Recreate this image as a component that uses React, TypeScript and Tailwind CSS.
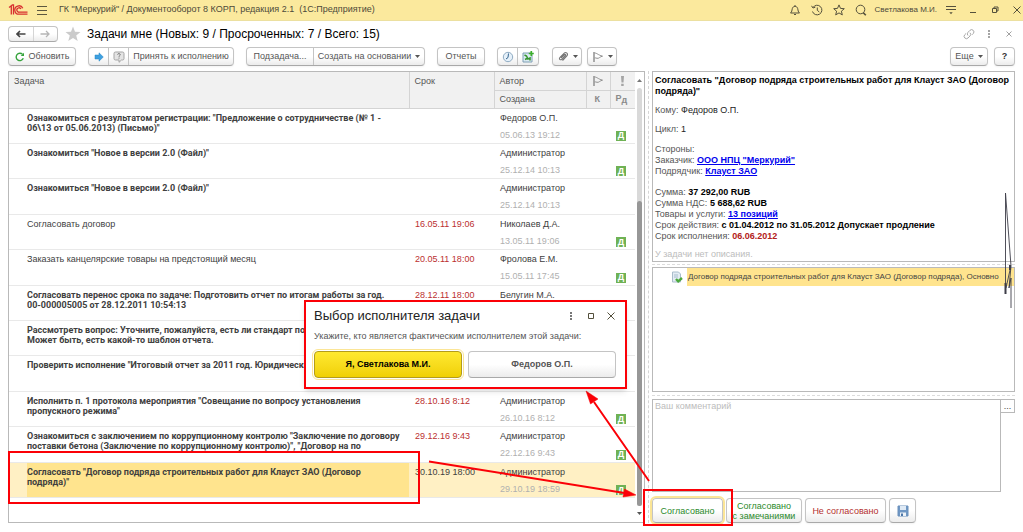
import type { ReactNode } from "react";

type Task = {
  text: string;
  due?: string;
  author: string;
  created: string;
  bold?: boolean;
  doc?: boolean;
  selected?: boolean;
};

const tasks: Task[] = [
  { text: 'Ознакомиться с результатом регистрации: "Предложение о сотрудничестве (№ 1 -\n06\\13 от 05.06.2013) (Письмо)"', author: "Федоров О.П.", created: "05.06.13 19:12", bold: true, doc: true },
  { text: 'Ознакомиться "Новое в версии 2.0 (Файл)"', author: "Администратор", created: "25.12.14 10:13", bold: true, doc: true },
  { text: 'Ознакомиться "Новое в версии 2.0 (Файл)"', author: "Администратор", created: "25.12.14 10:13", bold: true },
  { text: "Согласовать договор", due: "16.05.11 19:06", author: "Николаев Д.А.", created: "13.05.11 19:06", doc: true },
  { text: "Заказать канцелярские товары на предстоящий месяц", due: "20.05.11 18:00", author: "Фролова Е.М.", created: "15.05.11 17:45", doc: true },
  { text: "Согласовать перенос срока по задаче: Подготовить отчет по итогам работы за год.\n00-000005005 от 28.12.2011 10:54:13", due: "28.12.11 18:00", author: "Белугин М.А.", created: "", bold: true },
  { text: "Рассмотреть вопрос: Уточните, пожалуйста, есть ли стандарт по\nМожет быть, есть какой-то шаблон отчета.", author: "", created: "", bold: true },
  { text: 'Проверить исполнение "Итоговый отчет за 2011 год. Юридический', author: "", created: "", bold: true },
  { text: 'Исполнить п. 1 протокола мероприятия "Совещание по вопросу установления\nпропускного режима"', due: "28.10.16 8:12", author: "Администратор", created: "26.10.16 8:12", bold: true, doc: true },
  { text: 'Ознакомиться с заключением по коррупционному контролю "Заключение по договору\nпоставки бетона (Заключение по коррупционному контролю)", "Договор на по', due: "29.12.16 9:43", author: "Администратор", created: "22.12.16 9:43", bold: true, doc: true },
  { text: 'Согласовать "Договор подряда строительных работ для Клауст ЗАО (Договор\nподряда)"', due: "30.10.19 18:00", author: "Администратор", created: "29.10.19 18:59", bold: true, doc: true, selected: true },
];

const face = "bg-linear-to-b from-white from-50% to-[#ececec] border border-[#c4c4c4] border-b-[#a9a9a9]";

function Group({ children }: { children: ReactNode }) {
  return <div className={`flex h-[19px] shrink-0 divide-x divide-[#c4c4c4] rounded-sm shadow-xs ${face}`}>{children}</div>;
}

function Tool({ children, className = "", label }: { children: ReactNode; className?: string; label?: string }) {
  return (
    <button type="button" aria-label={label} className={`flex items-center justify-center gap-1 whitespace-nowrap ${className}`}>
      {children}
    </button>
  );
}

function Caret() {
  return (
    <svg viewBox="0 0 5 3" className="h-[3px] w-[5px] shrink-0" fill="#555">
      <path d="M0 0h5L2.5 3z" />
    </svg>
  );
}

function Flag() {
  return (
    <svg viewBox="0 0 12 12" className="size-3" fill="none" stroke="#909090" strokeWidth="1">
      <path d="M2 1v10" strokeWidth="1.5" />
      <path d="M2.500 2c2.500 0 3 1.700 8 3.200C8 5.500 7 7.800 5 7.300 4 7 3.500 6.700 2.500 7" />
    </svg>
  );
}

function DocBadge() {
  return <span className="flex size-[10px] items-center justify-center bg-[#6fb255] text-[9px] leading-none font-bold text-white">Д</span>;
}

function BarIcon({ label, children }: { label: string; children: ReactNode }) {
  return (
    <button type="button" aria-label={label} className="flex w-[12px] items-center justify-center">
      <svg viewBox="0 0 12 12" className="size-3 shrink-0" fill="none" stroke="#54503c" strokeWidth="1">
        {children}
      </svg>
    </button>
  );
}

function TitleBar() {
  return (
    <header className="flex h-[21px] shrink-0 items-center border-b border-[#ece0a0] bg-[#fbe99d] pl-2 text-[#4d4a3a]">
      <svg viewBox="0 0 20 12" className="h-3 w-5" fill="none" stroke="#d8302f" strokeWidth="1.3">
        <path d="M1 3.500L3.300 1.800V10.500M5.500 10.500V1H3.800" />
        <path d="M14.800 4.200A4.200 4.200 0 1 0 11.300 10.200H19.500" />
        <path d="M13 5A2.200 2.200 0 1 0 11.400 8.200H19.500" />
      </svg>
      <button type="button" aria-label="Меню" className="ml-[9px] flex w-3 flex-col gap-[3px]">
        <span className="h-px w-[10px] bg-[#5c573f]" />
        <span className="h-px w-[10px] bg-[#5c573f]" />
        <span className="h-px w-[10px] bg-[#5c573f]" />
      </button>
      <div className="ml-[10px] flex-1 text-[9px] whitespace-pre">ГК "Меркурий" / Документооборот 8 КОРП, редакция 2.1  (1С:Предприятие)</div>
      <div className="flex items-center gap-[10px]">
        <BarIcon label="Оповещения">
          <path d="M1.500 9h9C9 7.800 9.200 6.500 8.700 4.600 8.300 3 7.200 2.400 6 2.400S3.700 3 3.300 4.600C2.800 6.500 3 7.800 1.500 9zM6 1v1.400M5 10.500h2" />
        </BarIcon>
        <BarIcon label="История">
          <path d="M2 3.500A4.800 4.800 0 1 1 1.500 7.500M.5 1.800L2 4l2.300-.8M6.300 3.500V6.300L8.300 8" />
        </BarIcon>
        <BarIcon label="Избранное">
          <path d="M6 .9l1.500 3.500 3.800.3-2.900 2.500.9 3.700L6 8.900l-3.300 2 .9-3.700L.7 4.700l3.800-.3z" />
        </BarIcon>
        <BarIcon label="Поиск">
          <circle cx="5.500" cy="5.500" r="4.300" />
          <path d="M8.200 8.600l2.600 2.600" strokeWidth="1.600" />
        </BarIcon>
      </div>
      <span className="mx-2 text-[8px]">Светлакова М.И.</span>
      <div className="flex items-center gap-[10px]">
        <BarIcon label="Сервис">
          <path d="M1 2.500h10M1 5.500h10" />
          <path d="M4.300 8.300h3.400L6 10.300z" fill="#54503c" stroke="none" />
        </BarIcon>
        <BarIcon label="Свернуть">
          <path d="M3 8.500h6" />
        </BarIcon>
        <BarIcon label="Развернуть">
          <path d="M3.500 4.500h4v4h-4zM5 4.500V3h4v4H7.500" />
        </BarIcon>
        <BarIcon label="Закрыть">
          <path d="M2.500 2.500l7 7M9.500 2.500l-7 7" />
        </BarIcon>
      </div>
    </header>
  );
}

function PageHeading() {
  return (
    <div className="flex h-[26px] shrink-0 items-center px-2">
      <div className={`flex h-4 w-[50px] shrink-0 divide-x divide-[#d5d5d5] rounded-sm ${face}`}>
        <Tool label="Назад" className="flex-1">
          <svg viewBox="0 0 10 8" className="h-2 w-[10px]" fill="none" stroke="#444" strokeWidth="1.600">
            <path d="M1 4h8.500M4 1L1 4l3 3" />
          </svg>
        </Tool>
        <Tool label="Вперед" className="flex-1">
          <svg viewBox="0 0 10 8" className="h-2 w-[10px]" fill="none" stroke="#b5b5b5" strokeWidth="1.300">
            <path d="M.5 4H9M6 1l3 3-3 3" />
          </svg>
        </Tool>
      </div>
      <svg viewBox="0 0 16 16" className="ml-[7px] size-4 shrink-0" fill="#cbcbcb">
        <path d="M8 .5l2 5.200 5.500.3-4.300 3.500 1.500 5.500L8 12l-4.700 3 1.500-5.500L.5 6 6 5.700z" />
      </svg>
      <h1 className="ml-[6px] flex-1 text-[12px] text-black">Задачи мне (Новых: 9 / Просроченных: 7 / Всего: 15)</h1>
      <div className="flex items-center gap-[10px]">
        <svg viewBox="0 0 12 12" className="size-3" fill="none" stroke="#a8a8a8">
          <path d="M5 7.500a2.300 2.300 0 0 1 0-3.200l2-2a2.300 2.300 0 0 1 3.300 3.200L9 6.800M7 4.800a2.300 2.300 0 0 1 0 3.200l-2 2a2.300 2.300 0 0 1-3.300-3.200L3 5.500" />
        </svg>
        <svg viewBox="0 0 8 12" className="h-3 w-2" fill="#a5a5a5">
          <path d="M3 2h2v2H3zM3 5h2v2H3zM3 8h2v2H3z" />
        </svg>
        <svg viewBox="0 0 12 12" className="size-3" fill="none" stroke="#a0a0a0">
          <path d="M3.500 3.500l5 5M8.500 3.500l-5 5" />
        </svg>
      </div>
    </div>
  );
}

function Toolbar() {
  return (
    <div className="flex h-6 shrink-0 items-start gap-3 px-2 text-[9px] text-[#555]">
      <Group>
        <Tool className="w-[66px]">
          <svg viewBox="0 0 10 10" className="size-[10px]" fill="none" stroke="#36a33c" strokeWidth="1.400">
            <path d="M8.300 6.300A3.700 3.700 0 1 1 7.600 2.400" />
            <path d="M9 .8v3.300H5.700z" fill="#36a33c" stroke="none" />
          </svg>
          Обновить
        </Tool>
      </Group>
      <Group>
        <Tool label="Перейти" className="w-5">
          <svg viewBox="0 0 10 10" className="size-[10px]" fill="#3ea0e0" stroke="#2585c4" strokeWidth=".5">
            <path d="M1 3h4V.8L9.300 5 5 9.200V7H1z" />
          </svg>
        </Tool>
        <Tool label="Вопрос" className="w-5">
          <svg viewBox="0 0 12 12" className="size-3" fill="#e4e4e4" stroke="#a5a5a5">
            <path d="M2.500 1h7a1.500 1.500 0 0 1 1.500 1.500v5A1.500 1.500 0 0 1 9.500 9H8.500L6 11.300V9H2.500A1.500 1.500 0 0 1 1 7.500v-5A1.500 1.500 0 0 1 2.500 1z" />
            <path d="M4.500 3.600c.2-1.400 2.900-1.300 2.800.2C7.200 4.700 6 4.600 6 5.800M6 6.600v1" fill="none" stroke="#777" />
          </svg>
        </Tool>
        <Tool className="w-[104px]">Принять к исполнению</Tool>
      </Group>
      <Group>
        <Tool className="w-[67px]">Подзадача...</Tool>
        <Tool className="w-[110px]">Создать на основании <Caret /></Tool>
      </Group>
      <Group>
        <Tool className="w-[46px]">Отчеты</Tool>
      </Group>
      <Group>
        <Tool label="Срок" className="w-5">
          <svg viewBox="0 0 12 12" className="size-3" fill="#e6f1fa" stroke="#8fabc2">
            <circle cx="6" cy="6" r="4.700" />
            <path d="M6.500 2.500L6 6.500 4 8" fill="none" stroke="#35658e" />
          </svg>
        </Tool>
        <Tool label="Добавить" className="w-5">
          <svg viewBox="0 0 12 12" className="size-3">
            <path d="M1 2h9v9H1z" fill="#dcebf4" stroke="#7f9fb4" />
            <path d="M2.500 4l2 1 1.500 3 2-1v2.500M3 8.500l2-1" fill="none" stroke="#37962f" strokeWidth="1.600" />
            <path d="M9.300 0v5M6.800 2.500h5" stroke="#3cae2c" strokeWidth="1.700" />
          </svg>
        </Tool>
      </Group>
      <div className="flex flex-1 gap-[5px] pl-px">
        <Group>
          <Tool label="Файлы" className="w-7">
            <svg viewBox="0 0 12 12" className="size-3" fill="none" stroke="#777" strokeWidth="1.100">
              <path d="M4 7l3.500-3.500c.8-.8 1.800.2 1 1L4.800 8.300C3.400 9.700 1.500 7.800 3 6.400L7 2.300c2-1.900 4.800.6 2.900 2.600L5.500 9.500" />
            </svg>
            <Caret />
          </Tool>
        </Group>
        <Group>
          <Tool label="Флаг" className="w-7"><Flag /><Caret /></Tool>
        </Group>
      </div>
      <div className="flex gap-[6px]">
        <Group>
          <Tool className="w-9">Еще <Caret /></Tool>
        </Group>
        <Group>
          <Tool className="w-[19px] font-bold text-[#333]">?</Tool>
        </Group>
      </div>
    </div>
  );
}

function TaskTable() {
  const th = "border-[#d4d4d4] bg-[#f1f1f1] px-[5px] py-0 text-left font-normal";
  return (
    <section className="flex min-w-0 flex-1 border border-[#b9b9b9]">
      <div className="min-w-0 flex-1">
        <table className="h-[426px] w-full table-fixed border-collapse text-[9px] leading-[10px] text-[#404040]">
          <colgroup>
            <col />
            <col className="w-[85px]" />
            <col className="w-[92px]" />
            <col className="w-6" />
            <col className="w-[25px]" />
          </colgroup>
          <thead className="text-[#555]">
            <tr className="h-[18px]">
              <th rowSpan={2} className={`${th} border-r border-b pt-1 align-top`}>Задача</th>
              <th rowSpan={2} className={`${th} border-r border-b pt-1 align-top`}>Срок</th>
              <th className={`${th} border-r border-b`}>Автор</th>
              <th className={`${th} border-r border-b`} aria-label="Флаг"><Flag /></th>
              <th className={`${th} border-b`} aria-label="Важность">
                <svg viewBox="0 0 12 12" className="size-3" fill="#a5a5a5"><path d="M5 1h3L7.500 7.500h-2zM5.200 8.700h2.500V11H5.200z" /></svg>
              </th>
            </tr>
            <tr className="h-[18px]">
              <th className={`${th} border-r border-b`}>Создана</th>
              <th className={`${th} border-r border-b`}><span className="pl-[3px] font-bold text-[#8a8a8a]">К</span></th>
              <th className={`${th} border-b text-[#8a8a8a]`}>
                <span className="flex leading-[9px] font-bold"><span>Р</span><span className="pt-[2px]">д</span></span>
              </th>
            </tr>
          </thead>
          <tbody>
            {tasks.map((task, i) => (
              <tr key={i} className={`h-[35px] border-b border-[#e9e9e9] ${task.selected ? "bg-[#fff0c4]" : ""}`}>
                <td className="p-0 pl-[18px] align-top">
                  <div className={`h-[34px] pt-[4px] whitespace-pre ${task.bold ? "font-[Roboto,sans-serif] font-bold" : ""} ${task.selected ? "bg-[#ffe48e]" : ""}`}>{task.text}</div>
                </td>
                <td className={`px-[6px] pt-[4px] pb-0 align-top ${task.selected ? "" : "text-[#bb2f2f]"}`}>{task.due}</td>
                <td className="px-[6px] pt-[4px] pb-0 align-top">
                  {task.author}
                  <div className="pt-[7px] text-[#b0b0b0]">{task.created}</div>
                </td>
                <td className="p-0" />
                <td className="px-[6px] pt-0 pb-[2px] align-bottom">{task.doc && <DocBadge />}</td>
              </tr>
            ))}
          </tbody>
        </table>
      </div>
      <div className="flex w-[9px] shrink-0 flex-col items-center py-[7px]">
        <svg viewBox="0 0 5 3" className="h-[3px] w-[5px] shrink-0" fill="#777"><path d="M0 3h5L2.500 0z" /></svg>
        <div className="mt-[6px] flex w-[5px] flex-1 flex-col justify-end rounded-sm bg-[#d9d9d9]">
          <div className="h-[73%] rounded-sm bg-[#979797]" />
        </div>
        <div className="mt-[6px]"><Caret /></div>
      </div>
    </section>
  );
}

const link = "font-bold text-[#0000ee] underline";

function Details() {
  const answer = `flex items-center justify-center rounded-sm text-center leading-[10px] shadow-xs ${face}`;
  return (
    <aside className="flex w-[363px] shrink-0 flex-col text-[9px]">
      <div className="flex h-[191px] shrink-0 flex-col border border-[#b9b9b9] px-[2px] pt-[3px] leading-[11px] text-[#555]">
        <h2 className="font-bold text-black">Согласовать "Договор подряда строительных работ для Клауст ЗАО (Договор<br />подряда)"</h2>
        <p className="mt-2">Кому: <span className="text-[#222]">Федоров О.П.</span></p>
        <p className="mt-2">Цикл: <span className="text-[#222]">1</span></p>
        <div className="mt-[9px]">
          <p>Стороны:</p>
          <p>Заказчик: <a href="#customer" className={link}>ООО НПЦ "Меркурий"</a></p>
          <p>Подрядчик: <a href="#contractor" className={link}>Клауст ЗАО</a></p>
        </div>
        <div className="mt-[10px]">
          <p>Сумма: <b className="text-black">37 292,00 RUB</b></p>
          <p>Сумма НДС: <b className="text-black">5 688,62 RUB</b></p>
          <p>Товары и услуги: <a href="#items" className={link}>13 позиций</a></p>
          <p>Срок действия: <b className="text-black">с 01.04.2012 по 31.05.2012 Допускает продление</b></p>
          <p>Срок исполнения: <b className="text-[#b32020]">06.06.2012</b></p>
        </div>
        <p className="mt-[7px] text-[#bcbcbc]">У задачи нет описания.</p>
      </div>
      <div className="my-[2px] shrink-0 border-b border-dashed border-[#dcdcdc]" />
      <div className="h-[125px] shrink-0 border border-[#b9b9b9]">
        <div className="flex items-center pl-[18px]">
          <svg viewBox="0 0 12 12" className="mr-[4px] size-3 shrink-0">
            <path d="M1.500 1h6l2 2v8h-8z" fill="#e3ecf3" stroke="#a9bccb" />
            <path d="M3 4h4M3 6h4" stroke="#a7bccd" />
            <path d="M5 8l2.200 2.300L11 7" fill="none" stroke="#4ca83d" strokeWidth="2.400" />
          </svg>
          <div className="h-[18px] min-w-0 flex-1 bg-[#ffe48e] pl-px text-[8px] leading-[18px] whitespace-nowrap text-[#444]">
            Договор подряда строительных работ для Клауст ЗАО (Договор подряда), Основно
          </div>
        </div>
      </div>
      <div className="my-[3px] shrink-0 border-b border-dashed border-[#dcdcdc]" />
      <div className="flex min-h-[93px] flex-1 items-start">
        <textarea aria-label="Ваш комментарий" placeholder="Ваш комментарий" className="h-full min-w-0 flex-1 resize-none border border-[#b9b9b9] px-[2px] py-px leading-[11px] placeholder:text-[#bcbcbc]" />
        <button type="button" aria-label="Выбрать" className="h-[14px] w-[14px] border border-l-0 border-[#b9b9b9] leading-[8px] text-[#444]">...</button>
      </div>
      <div className="mt-[6px] flex h-[25px] shrink-0 gap-[3px]">
        <button type="button" className={`${answer} w-[71px] text-[#2b8a2b] outline-2 outline-[#fbe596]`}>Согласовано</button>
        <button type="button" className={`${answer} w-[76px] text-[#2b8a2b]`}>Согласовано<br />с замечаниями</button>
        <button type="button" className={`${answer} w-[81px] text-[#b32f2f]`}>Не согласовано</button>
        <button type="button" aria-label="Сохранить" className={`${answer} w-[27px]`}>
          <svg viewBox="0 0 12 12" className="size-3">
            <path d="M1 1h10v10H1z" fill="#6f97c4" stroke="#6b90bb" />
            <path d="M3 1h6v4H3z" fill="#dfeaf5" />
            <path d="M3 7.500h6V11H3z" fill="#eef3f8" />
            <path d="M4 8.500h2V11H4z" fill="#4c77a8" />
          </svg>
        </button>
      </div>
    </aside>
  );
}

function PerformerDialog() {
  return (
    <div role="dialog" aria-labelledby="dialog-title" className="absolute top-[300px] left-[304px] w-[323px] border-2 border-[#fb0007] bg-white px-2 pt-[6px] pb-[9px] text-[9px] text-[#555] shadow-md">
      <div className="flex items-center">
        <h2 id="dialog-title" className="flex-1 text-[13px] leading-4 text-[#222]">Выбор исполнителя задачи</h2>
        <div className="flex gap-2">
          <BarIcon label="Еще"><path d="M5 2h2v2H5zM5 5h2v2H5zM5 8h2v2H5z" fill="#777" stroke="none" /></BarIcon>
          <BarIcon label="Развернуть"><path d="M3.500 3.500h5v5h-5z" /></BarIcon>
          <BarIcon label="Закрыть"><path d="M2.500 2.500l7 7M9.500 2.500l-7 7" /></BarIcon>
        </div>
      </div>
      <p className="mt-[5px] leading-[14px]">Укажите, кто является фактическим исполнителем этой задачи:</p>
      <div className="mt-2 flex gap-[6px] pr-px font-bold">
        <button type="button" className="h-[27px] flex-1 rounded-sm border border-[#b39c1c] bg-linear-to-b from-[#ffe92e] to-[#f0d000] text-black outline-1 outline-offset-1 outline-[#fbe596]">Я, Светлакова М.И.</button>
        <button type="button" className={`h-[27px] flex-1 rounded-sm ${face}`}>Федоров О.П.</button>
      </div>
    </div>
  );
}

function Callouts() {
  return (
    <>
      <div className="pointer-events-none absolute top-[451px] left-[8px] h-[53px] w-[412px] border-2 border-[#fb0007]" />
      <div className="pointer-events-none absolute top-[489px] left-[643px] h-[37px] w-[90px] border-2 border-[#fb0007]" />
      <svg viewBox="0 0 1023 532" className="pointer-events-none absolute top-0 left-0 h-[532px] w-[1023px]">
        <g stroke="#fb0007" strokeWidth="2" fill="#fb0007">
          <path d="M429 461.500L626 493.300M649 481L594 402" />
          <path d="M636 495L623 497 624.500 489zM586 391L598 399 590.500 404z" strokeWidth=".5" />
        </g>
        <g stroke="#3d3d48" fill="none">
          <path d="M1005.500 193v101M1005.500 193l5.500 73-2 22 2-10v30M1006 288l4-18" strokeWidth=".9" />
          <path d="M1010 265v5M1005.500 283v11" strokeWidth="2" />
        </g>
      </svg>
    </>
  );
}

export default function App() {
  return (
    <div className="relative flex min-h-screen flex-col border-b border-[#c0c0c0] bg-white font-['Liberation_Sans',Arial,sans-serif] leading-normal">
      <TitleBar />
      <PageHeading />
      <Toolbar />
      <main className="flex flex-1 px-2 pb-[9px]">
        <TaskTable />
        <div className="mx-[3px] w-px border-r border-dashed border-[#d6d6d6]" />
        <Details />
      </main>
      <Callouts />
      <PerformerDialog />
    </div>
  );
}
